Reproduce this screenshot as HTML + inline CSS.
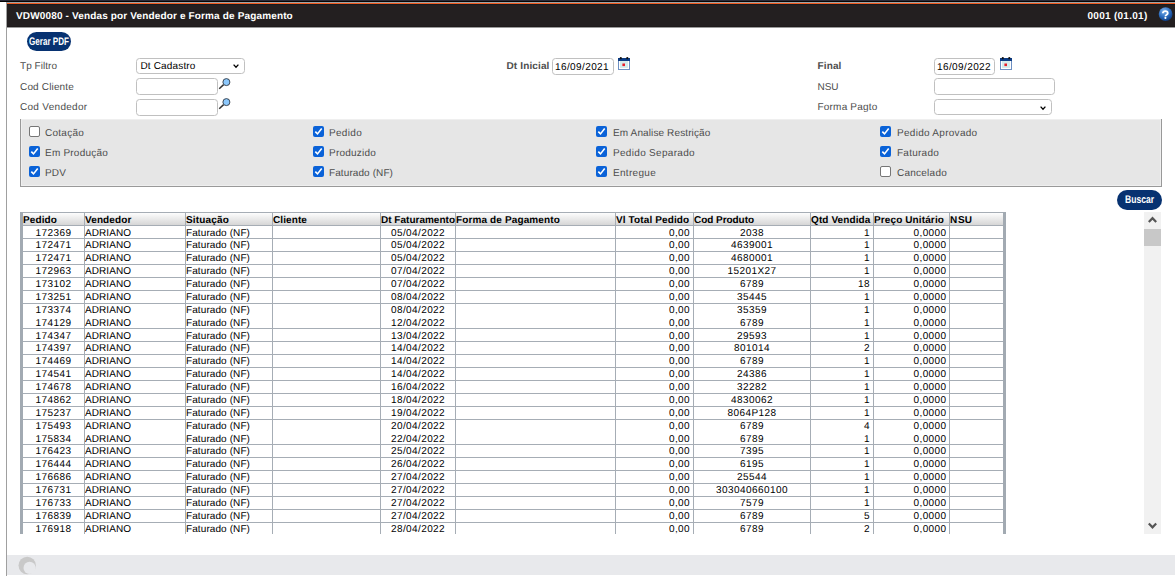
<!DOCTYPE html><html><head><meta charset="utf-8"><style>
*{margin:0;padding:0;box-sizing:border-box}
html,body{width:1175px;height:576px;overflow:hidden;background:#fff;font-family:"Liberation Sans",sans-serif;position:relative}
.a{position:absolute}
.t{position:absolute;white-space:nowrap;font-size:10px;line-height:12px;text-rendering:geometricPrecision}
.inp{position:absolute;border:1px solid #c0c0c0;border-radius:3.5px;background:#fff}
.cb{position:absolute;width:11px;height:11px;border-radius:2px}
.cb.on{background:#0a62d8}
.cb.off{background:#fff;border:1px solid #767676}
.btn{position:absolute;background:#073271;border-radius:10px}
</style></head><body>
<div class="a" style="left:0px;top:0px;width:1175px;height:1px;background:#2a2a38;"></div>
<div class="a" style="left:0px;top:1px;width:1175px;height:1px;background:#050505;"></div>
<div class="a" style="left:6px;top:2px;width:1px;height:574px;background:#a0a0a0;"></div>
<div class="a" style="left:7px;top:2px;width:1168px;height:1px;background:#a0a4a4;"></div>
<div class="a" style="left:7px;top:3px;width:1168px;height:1px;background:#f05a20;"></div>
<div class="a" style="left:7px;top:4px;width:1168px;height:1px;background:#161a1e;"></div>
<div class="a" style="left:7px;top:5px;width:1168px;height:22px;background:#231f20;"></div>
<div class="a" style="left:7px;top:26px;width:1168px;height:1px;background:#1e1a1b;"></div>
<div class="a" style="left:7px;top:27px;width:1168px;height:1px;background:#9a9a9a;"></div>
<div class="t" style="top:11px;letter-spacing:0.147px;color:#fff;font-weight:bold;left:16px;">VDW0080 - Vendas por Vendedor e Forma de Pagamento</div>
<div class="t" style="top:11px;letter-spacing:0.274px;color:#fff;font-weight:bold;left:1087.5px;">0001 (01.01)</div>
<svg class="a" style="left:1157px;top:6px" width="17" height="17" viewBox="0 0 17 17"><defs><radialGradient id="hg" cx="38%" cy="28%" r="75%"><stop offset="0" stop-color="#7fb4ee"/><stop offset="0.55" stop-color="#2f6fc0"/><stop offset="1" stop-color="#0a3a82"/></radialGradient></defs><circle cx="8.6" cy="8.05" r="6.9" fill="url(#hg)"/><path d="M5.85 7.2 C5.85 6 7 5.2 8.3 5.2 C9.7 5.2 10.75 6 10.75 7.2 C10.75 8.6 8.4 8.8 8.4 10.3" fill="none" stroke="#fff" stroke-width="1.8"/><circle cx="8.4" cy="11.9" r="1.05" fill="#fff"/></svg>
<div class="btn" style="left:27px;top:32px;width:44px;height:19px"></div>
<div class="t" style="left:28.5px;top:36px;color:#fff;font-size:11px;font-weight:bold;transform:scaleX(0.735);transform-origin:0 0">Gerar PDF</div>
<div class="t" style="top:61px;letter-spacing:0.037px;color:#4d4d4d;left:20px;">Tp Filtro</div>
<div class="t" style="top:82px;letter-spacing:0.159px;color:#4d4d4d;left:20px;">Cod Cliente</div>
<div class="t" style="top:102px;letter-spacing:0.292px;color:#4d4d4d;left:20px;">Cod Vendedor</div>
<div class="inp" style="left:136px;top:58px;width:109px;height:16px"></div>
<div class="t" style="top:61px;letter-spacing:0.150px;color:#000;left:140.5px;">Dt Cadastro</div>
<svg class="a" style="left:232px;top:63px" width="9" height="6" viewBox="0 0 9 6"><path d="M1.6 1.6 L4 4.2 L6.4 1.6" fill="none" stroke="#000" stroke-width="1.3"/></svg>
<div class="inp" style="left:136px;top:78px;width:82px;height:17px"></div>
<div class="inp" style="left:136px;top:99px;width:82px;height:17px"></div>
<svg class="a" style="left:218px;top:78px" width="14" height="14" viewBox="0 0 14 14"><line x1="1.2" y1="10.8" x2="5.6" y2="6.6" stroke="#333" stroke-width="1.5"/><circle cx="8.4" cy="4.1" r="3.5" fill="#8cc8fc" stroke="#333a44" stroke-width="0.9"/></svg>
<svg class="a" style="left:218px;top:98px" width="14" height="14" viewBox="0 0 14 14"><line x1="1.2" y1="10.8" x2="5.6" y2="6.6" stroke="#333" stroke-width="1.5"/><circle cx="8.4" cy="4.1" r="3.5" fill="#8cc8fc" stroke="#333a44" stroke-width="0.9"/></svg>
<div class="t" style="top:61px;letter-spacing:0.133px;color:#4d4d4d;font-weight:bold;left:506.5px;">Dt Inicial</div>
<div class="inp" style="left:552px;top:58px;width:62px;height:17px"></div>
<div class="t" style="top:62px;letter-spacing:0.395px;color:#000;left:555px;">16/09/2021</div>
<svg class="a" style="left:618px;top:57px" width="13" height="13" viewBox="0 0 13 13"><rect x="0.5" y="1.5" width="11" height="11" fill="#fff" stroke="#6d8fc2"/><rect x="2" y="4" width="8" height="7" fill="#d4ecec"/><rect x="0" y="1" width="12" height="3" fill="#0c3c84"/><circle cx="2.8" cy="1.2" r="1.1" fill="#111"/><circle cx="9.3" cy="1.2" r="1.1" fill="#111"/><rect x="4.4" y="6.5" width="2.6" height="2.6" fill="#e8202a"/></svg>
<div class="t" style="top:61px;letter-spacing:0.133px;color:#4d4d4d;font-weight:bold;left:817.5px;">Final</div>
<div class="inp" style="left:934px;top:58px;width:61px;height:17px"></div>
<div class="t" style="top:62px;letter-spacing:0.395px;color:#000;left:937px;">16/09/2022</div>
<svg class="a" style="left:1000px;top:57px" width="13" height="13" viewBox="0 0 13 13"><rect x="0.5" y="1.5" width="11" height="11" fill="#fff" stroke="#6d8fc2"/><rect x="2" y="4" width="8" height="7" fill="#d4ecec"/><rect x="0" y="1" width="12" height="3" fill="#0c3c84"/><circle cx="2.8" cy="1.2" r="1.1" fill="#111"/><circle cx="9.3" cy="1.2" r="1.1" fill="#111"/><rect x="4.4" y="6.5" width="2.6" height="2.6" fill="#e8202a"/></svg>
<div class="t" style="top:82px;letter-spacing:-0.038px;color:#4d4d4d;left:817.5px;">NSU</div>
<div class="inp" style="left:934px;top:78px;width:121px;height:17px"></div>
<div class="t" style="top:102px;letter-spacing:0.200px;color:#4d4d4d;left:817.5px;">Forma Pagto</div>
<div class="inp" style="left:934px;top:99px;width:118px;height:16px"></div>
<svg class="a" style="left:1038.8px;top:105px" width="9" height="6" viewBox="0 0 9 6"><path d="M1.6 1.6 L4 4.2 L6.4 1.6" fill="none" stroke="#000" stroke-width="1.3"/></svg>
<div class="a" style="left:20px;top:119px;width:1142px;height:68px;background:#e6e6e6;border:1px solid #999;border-top:0;box-shadow:inset 1px 1px 0 #efefef,inset -1px -1px 0 #efefef"></div>
<div class="cb off" style="left:29px;top:126px"></div>
<div class="t" style="top:128px;letter-spacing:0.251px;color:#4d4d4d;left:45px;">Cotação</div>
<div class="cb on" style="left:29px;top:146px"><svg width="11" height="11" viewBox="0 0 11 11" style="position:absolute;left:0;top:0"><path d="M2.3 5.6 L4.5 7.9 L8.7 2.6" fill="none" stroke="#fff" stroke-width="1.6"/></svg></div>
<div class="t" style="top:148px;letter-spacing:0.219px;color:#4d4d4d;left:45px;">Em Produção</div>
<div class="cb on" style="left:29px;top:166px"><svg width="11" height="11" viewBox="0 0 11 11" style="position:absolute;left:0;top:0"><path d="M2.3 5.6 L4.5 7.9 L8.7 2.6" fill="none" stroke="#fff" stroke-width="1.6"/></svg></div>
<div class="t" style="top:168px;letter-spacing:0.146px;color:#4d4d4d;left:45px;">PDV</div>
<div class="cb on" style="left:313px;top:126px"><svg width="11" height="11" viewBox="0 0 11 11" style="position:absolute;left:0;top:0"><path d="M2.3 5.6 L4.5 7.9 L8.7 2.6" fill="none" stroke="#fff" stroke-width="1.6"/></svg></div>
<div class="t" style="top:128px;letter-spacing:0.310px;color:#4d4d4d;left:329px;">Pedido</div>
<div class="cb on" style="left:313px;top:146px"><svg width="11" height="11" viewBox="0 0 11 11" style="position:absolute;left:0;top:0"><path d="M2.3 5.6 L4.5 7.9 L8.7 2.6" fill="none" stroke="#fff" stroke-width="1.6"/></svg></div>
<div class="t" style="top:148px;letter-spacing:0.219px;color:#4d4d4d;left:329px;">Produzido</div>
<div class="cb on" style="left:313px;top:166px"><svg width="11" height="11" viewBox="0 0 11 11" style="position:absolute;left:0;top:0"><path d="M2.3 5.6 L4.5 7.9 L8.7 2.6" fill="none" stroke="#fff" stroke-width="1.6"/></svg></div>
<div class="t" style="top:168px;letter-spacing:0.093px;color:#4d4d4d;left:329px;">Faturado (NF)</div>
<div class="cb on" style="left:596px;top:126px"><svg width="11" height="11" viewBox="0 0 11 11" style="position:absolute;left:0;top:0"><path d="M2.3 5.6 L4.5 7.9 L8.7 2.6" fill="none" stroke="#fff" stroke-width="1.6"/></svg></div>
<div class="t" style="top:128px;letter-spacing:0.120px;color:#4d4d4d;left:613px;">Em Analise Restrição</div>
<div class="cb on" style="left:596px;top:146px"><svg width="11" height="11" viewBox="0 0 11 11" style="position:absolute;left:0;top:0"><path d="M2.3 5.6 L4.5 7.9 L8.7 2.6" fill="none" stroke="#fff" stroke-width="1.6"/></svg></div>
<div class="t" style="top:148px;letter-spacing:0.314px;color:#4d4d4d;left:613px;">Pedido Separado</div>
<div class="cb on" style="left:596px;top:166px"><svg width="11" height="11" viewBox="0 0 11 11" style="position:absolute;left:0;top:0"><path d="M2.3 5.6 L4.5 7.9 L8.7 2.6" fill="none" stroke="#fff" stroke-width="1.6"/></svg></div>
<div class="t" style="top:168px;letter-spacing:0.302px;color:#4d4d4d;left:613px;">Entregue</div>
<div class="cb on" style="left:880px;top:126px"><svg width="11" height="11" viewBox="0 0 11 11" style="position:absolute;left:0;top:0"><path d="M2.3 5.6 L4.5 7.9 L8.7 2.6" fill="none" stroke="#fff" stroke-width="1.6"/></svg></div>
<div class="t" style="top:128px;letter-spacing:0.285px;color:#4d4d4d;left:897px;">Pedido Aprovado</div>
<div class="cb on" style="left:880px;top:146px"><svg width="11" height="11" viewBox="0 0 11 11" style="position:absolute;left:0;top:0"><path d="M2.3 5.6 L4.5 7.9 L8.7 2.6" fill="none" stroke="#fff" stroke-width="1.6"/></svg></div>
<div class="t" style="top:148px;letter-spacing:0.247px;color:#4d4d4d;left:897px;">Faturado</div>
<div class="cb off" style="left:880px;top:166px"></div>
<div class="t" style="top:168px;letter-spacing:0.243px;color:#4d4d4d;left:897px;">Cancelado</div>
<div class="btn" style="left:1117px;top:190px;width:45px;height:20px"></div>
<div class="t" style="left:1124.5px;top:194px;color:#fff;font-size:11px;font-weight:bold;transform:scaleX(0.78);transform-origin:0 0">Buscar</div>
<div class="a" style="left:20px;top:212px;width:986px;height:1px;background:#a6adb5;"></div>
<div class="a" style="left:20px;top:212px;width:3px;height:322px;background:#a2aab2;"></div>
<div class="a" style="left:1003px;top:212px;width:3px;height:322px;background:#a2aab2;"></div>
<div class="a" style="left:23px;top:213px;width:980px;height:12px;background:linear-gradient(#fdfdfd,#d6d6d6);"></div>
<div class="a" style="left:23px;top:225px;width:980px;height:1px;background:#a6adb5;"></div>
<div class="a" style="left:23px;top:238px;width:980px;height:1px;background:#a6adb5;"></div>
<div class="a" style="left:23px;top:251px;width:980px;height:1px;background:#a6adb5;"></div>
<div class="a" style="left:23px;top:264px;width:980px;height:1px;background:#a6adb5;"></div>
<div class="a" style="left:23px;top:277px;width:980px;height:1px;background:#a6adb5;"></div>
<div class="a" style="left:23px;top:290px;width:980px;height:1px;background:#a6adb5;"></div>
<div class="a" style="left:23px;top:303px;width:980px;height:1px;background:#a6adb5;"></div>
<div class="a" style="left:23px;top:328px;width:980px;height:1px;background:#a6adb5;"></div>
<div class="a" style="left:23px;top:341px;width:980px;height:1px;background:#a6adb5;"></div>
<div class="a" style="left:23px;top:354px;width:980px;height:1px;background:#a6adb5;"></div>
<div class="a" style="left:23px;top:367px;width:980px;height:1px;background:#a6adb5;"></div>
<div class="a" style="left:23px;top:380px;width:980px;height:1px;background:#a6adb5;"></div>
<div class="a" style="left:23px;top:393px;width:980px;height:1px;background:#a6adb5;"></div>
<div class="a" style="left:23px;top:406px;width:980px;height:1px;background:#a6adb5;"></div>
<div class="a" style="left:23px;top:419px;width:980px;height:1px;background:#a6adb5;"></div>
<div class="a" style="left:23px;top:444px;width:980px;height:1px;background:#a6adb5;"></div>
<div class="a" style="left:23px;top:457px;width:980px;height:1px;background:#a6adb5;"></div>
<div class="a" style="left:23px;top:470px;width:980px;height:1px;background:#a6adb5;"></div>
<div class="a" style="left:23px;top:483px;width:980px;height:1px;background:#a6adb5;"></div>
<div class="a" style="left:23px;top:496px;width:980px;height:1px;background:#a6adb5;"></div>
<div class="a" style="left:23px;top:509px;width:980px;height:1px;background:#a6adb5;"></div>
<div class="a" style="left:23px;top:522px;width:980px;height:1px;background:#a6adb5;"></div>
<div class="a" style="left:84px;top:213px;width:1px;height:321px;background:#a6adb5;"></div>
<div class="a" style="left:185px;top:213px;width:1px;height:321px;background:#a6adb5;"></div>
<div class="a" style="left:272px;top:213px;width:1px;height:321px;background:#a6adb5;"></div>
<div class="a" style="left:380px;top:213px;width:1px;height:321px;background:#a6adb5;"></div>
<div class="a" style="left:455px;top:213px;width:1px;height:321px;background:#a6adb5;"></div>
<div class="a" style="left:615px;top:213px;width:1px;height:321px;background:#a6adb5;"></div>
<div class="a" style="left:693px;top:213px;width:1px;height:321px;background:#a6adb5;"></div>
<div class="a" style="left:810px;top:213px;width:1px;height:321px;background:#a6adb5;"></div>
<div class="a" style="left:873px;top:213px;width:1px;height:321px;background:#a6adb5;"></div>
<div class="a" style="left:949px;top:213px;width:1px;height:321px;background:#a6adb5;"></div>
<div class="t" style="top:215px;letter-spacing:0.111px;color:#000;font-weight:bold;left:23px;">Pedido</div>
<div class="t" style="top:215px;letter-spacing:0.110px;color:#000;font-weight:bold;left:85px;">Vendedor</div>
<div class="t" style="top:215px;letter-spacing:0.165px;color:#000;font-weight:bold;left:186px;">Situação</div>
<div class="t" style="top:215px;letter-spacing:0.094px;color:#000;font-weight:bold;left:273px;">Cliente</div>
<div class="t" style="top:215px;letter-spacing:0.008px;color:#000;font-weight:bold;left:381px;">Dt Faturamento</div>
<div class="t" style="top:215px;letter-spacing:0.128px;color:#000;font-weight:bold;left:456px;">Forma de Pagamento</div>
<div class="t" style="top:215px;letter-spacing:0.118px;color:#000;font-weight:bold;left:616px;">Vl Total Pedido</div>
<div class="t" style="top:215px;letter-spacing:-0.049px;color:#000;font-weight:bold;left:694px;">Cod Produto</div>
<div class="t" style="top:215px;letter-spacing:0.101px;color:#000;font-weight:bold;left:811px;">Qtd Vendida</div>
<div class="t" style="top:215px;letter-spacing:0.118px;color:#000;font-weight:bold;left:874px;">Preço Unitário</div>
<div class="t" style="top:215px;letter-spacing:-0.222px;color:#000;font-weight:bold;left:950px;">N</div>
<div class="t" style="top:215px;letter-spacing:0.054px;color:#000;font-weight:bold;left:958px;">SU</div>
<div class="t" style="top:228px;letter-spacing:0.438px;color:#000;left:35.50px;">172369</div>
<div class="t" style="top:228px;letter-spacing:0.063px;color:#000;left:85px;">ADRIANO</div>
<div class="t" style="top:228px;letter-spacing:0.093px;color:#000;left:186px;">Faturado (NF)</div>
<div class="t" style="top:228px;letter-spacing:0.395px;color:#000;left:391.00px;">05/04/2022</div>
<div class="t" style="top:228px;letter-spacing:0.384px;color:#000;left:669px;">0,00</div>
<div class="t" style="top:228px;letter-spacing:0.438px;color:#000;left:740.00px;">2038</div>
<div class="t" style="top:228px;letter-spacing:0.438px;color:#000;left:864px;">1</div>
<div class="t" style="top:228px;letter-spacing:0.402px;color:#000;left:913.5px;">0,0000</div>
<div class="t" style="top:240px;letter-spacing:0.438px;color:#000;left:35.50px;">172471</div>
<div class="t" style="top:240px;letter-spacing:0.063px;color:#000;left:85px;">ADRIANO</div>
<div class="t" style="top:240px;letter-spacing:0.093px;color:#000;left:186px;">Faturado (NF)</div>
<div class="t" style="top:240px;letter-spacing:0.395px;color:#000;left:391.00px;">05/04/2022</div>
<div class="t" style="top:240px;letter-spacing:0.384px;color:#000;left:669px;">0,00</div>
<div class="t" style="top:240px;letter-spacing:0.438px;color:#000;left:731.00px;">4639001</div>
<div class="t" style="top:240px;letter-spacing:0.438px;color:#000;left:864px;">1</div>
<div class="t" style="top:240px;letter-spacing:0.402px;color:#000;left:913.5px;">0,0000</div>
<div class="t" style="top:253px;letter-spacing:0.438px;color:#000;left:35.50px;">172471</div>
<div class="t" style="top:253px;letter-spacing:0.063px;color:#000;left:85px;">ADRIANO</div>
<div class="t" style="top:253px;letter-spacing:0.093px;color:#000;left:186px;">Faturado (NF)</div>
<div class="t" style="top:253px;letter-spacing:0.395px;color:#000;left:391.00px;">05/04/2022</div>
<div class="t" style="top:253px;letter-spacing:0.384px;color:#000;left:669px;">0,00</div>
<div class="t" style="top:253px;letter-spacing:0.438px;color:#000;left:731.00px;">4680001</div>
<div class="t" style="top:253px;letter-spacing:0.438px;color:#000;left:864px;">1</div>
<div class="t" style="top:253px;letter-spacing:0.402px;color:#000;left:913.5px;">0,0000</div>
<div class="t" style="top:266px;letter-spacing:0.438px;color:#000;left:35.50px;">172963</div>
<div class="t" style="top:266px;letter-spacing:0.063px;color:#000;left:85px;">ADRIANO</div>
<div class="t" style="top:266px;letter-spacing:0.093px;color:#000;left:186px;">Faturado (NF)</div>
<div class="t" style="top:266px;letter-spacing:0.395px;color:#000;left:391.00px;">07/04/2022</div>
<div class="t" style="top:266px;letter-spacing:0.384px;color:#000;left:669px;">0,00</div>
<div class="t" style="top:266px;letter-spacing:0.425px;color:#000;left:727.50px;">15201X27</div>
<div class="t" style="top:266px;letter-spacing:0.438px;color:#000;left:864px;">1</div>
<div class="t" style="top:266px;letter-spacing:0.402px;color:#000;left:913.5px;">0,0000</div>
<div class="t" style="top:279px;letter-spacing:0.438px;color:#000;left:35.50px;">173102</div>
<div class="t" style="top:279px;letter-spacing:0.063px;color:#000;left:85px;">ADRIANO</div>
<div class="t" style="top:279px;letter-spacing:0.093px;color:#000;left:186px;">Faturado (NF)</div>
<div class="t" style="top:279px;letter-spacing:0.395px;color:#000;left:391.00px;">07/04/2022</div>
<div class="t" style="top:279px;letter-spacing:0.384px;color:#000;left:669px;">0,00</div>
<div class="t" style="top:279px;letter-spacing:0.438px;color:#000;left:740.00px;">6789</div>
<div class="t" style="top:279px;letter-spacing:0.438px;color:#000;left:858px;">18</div>
<div class="t" style="top:279px;letter-spacing:0.402px;color:#000;left:913.5px;">0,0000</div>
<div class="t" style="top:292px;letter-spacing:0.438px;color:#000;left:35.50px;">173251</div>
<div class="t" style="top:292px;letter-spacing:0.063px;color:#000;left:85px;">ADRIANO</div>
<div class="t" style="top:292px;letter-spacing:0.093px;color:#000;left:186px;">Faturado (NF)</div>
<div class="t" style="top:292px;letter-spacing:0.395px;color:#000;left:391.00px;">08/04/2022</div>
<div class="t" style="top:292px;letter-spacing:0.384px;color:#000;left:669px;">0,00</div>
<div class="t" style="top:292px;letter-spacing:0.438px;color:#000;left:737.00px;">35445</div>
<div class="t" style="top:292px;letter-spacing:0.438px;color:#000;left:864px;">1</div>
<div class="t" style="top:292px;letter-spacing:0.402px;color:#000;left:913.5px;">0,0000</div>
<div class="t" style="top:305px;letter-spacing:0.438px;color:#000;left:35.50px;">173374</div>
<div class="t" style="top:305px;letter-spacing:0.063px;color:#000;left:85px;">ADRIANO</div>
<div class="t" style="top:305px;letter-spacing:0.093px;color:#000;left:186px;">Faturado (NF)</div>
<div class="t" style="top:305px;letter-spacing:0.395px;color:#000;left:391.00px;">08/04/2022</div>
<div class="t" style="top:305px;letter-spacing:0.384px;color:#000;left:669px;">0,00</div>
<div class="t" style="top:305px;letter-spacing:0.438px;color:#000;left:737.00px;">35359</div>
<div class="t" style="top:305px;letter-spacing:0.438px;color:#000;left:864px;">1</div>
<div class="t" style="top:305px;letter-spacing:0.402px;color:#000;left:913.5px;">0,0000</div>
<div class="t" style="top:318px;letter-spacing:0.438px;color:#000;left:35.50px;">174129</div>
<div class="t" style="top:318px;letter-spacing:0.063px;color:#000;left:85px;">ADRIANO</div>
<div class="t" style="top:318px;letter-spacing:0.093px;color:#000;left:186px;">Faturado (NF)</div>
<div class="t" style="top:318px;letter-spacing:0.395px;color:#000;left:391.00px;">12/04/2022</div>
<div class="t" style="top:318px;letter-spacing:0.384px;color:#000;left:669px;">0,00</div>
<div class="t" style="top:318px;letter-spacing:0.438px;color:#000;left:740.00px;">6789</div>
<div class="t" style="top:318px;letter-spacing:0.438px;color:#000;left:864px;">1</div>
<div class="t" style="top:318px;letter-spacing:0.402px;color:#000;left:913.5px;">0,0000</div>
<div class="t" style="top:331px;letter-spacing:0.438px;color:#000;left:35.50px;">174347</div>
<div class="t" style="top:331px;letter-spacing:0.063px;color:#000;left:85px;">ADRIANO</div>
<div class="t" style="top:331px;letter-spacing:0.093px;color:#000;left:186px;">Faturado (NF)</div>
<div class="t" style="top:331px;letter-spacing:0.395px;color:#000;left:391.00px;">13/04/2022</div>
<div class="t" style="top:331px;letter-spacing:0.384px;color:#000;left:669px;">0,00</div>
<div class="t" style="top:331px;letter-spacing:0.438px;color:#000;left:737.00px;">29593</div>
<div class="t" style="top:331px;letter-spacing:0.438px;color:#000;left:864px;">1</div>
<div class="t" style="top:331px;letter-spacing:0.402px;color:#000;left:913.5px;">0,0000</div>
<div class="t" style="top:343px;letter-spacing:0.438px;color:#000;left:35.50px;">174397</div>
<div class="t" style="top:343px;letter-spacing:0.063px;color:#000;left:85px;">ADRIANO</div>
<div class="t" style="top:343px;letter-spacing:0.093px;color:#000;left:186px;">Faturado (NF)</div>
<div class="t" style="top:343px;letter-spacing:0.395px;color:#000;left:391.00px;">14/04/2022</div>
<div class="t" style="top:343px;letter-spacing:0.384px;color:#000;left:669px;">0,00</div>
<div class="t" style="top:343px;letter-spacing:0.438px;color:#000;left:734.00px;">801014</div>
<div class="t" style="top:343px;letter-spacing:0.438px;color:#000;left:864px;">2</div>
<div class="t" style="top:343px;letter-spacing:0.402px;color:#000;left:913.5px;">0,0000</div>
<div class="t" style="top:356px;letter-spacing:0.438px;color:#000;left:35.50px;">174469</div>
<div class="t" style="top:356px;letter-spacing:0.063px;color:#000;left:85px;">ADRIANO</div>
<div class="t" style="top:356px;letter-spacing:0.093px;color:#000;left:186px;">Faturado (NF)</div>
<div class="t" style="top:356px;letter-spacing:0.395px;color:#000;left:391.00px;">14/04/2022</div>
<div class="t" style="top:356px;letter-spacing:0.384px;color:#000;left:669px;">0,00</div>
<div class="t" style="top:356px;letter-spacing:0.438px;color:#000;left:740.00px;">6789</div>
<div class="t" style="top:356px;letter-spacing:0.438px;color:#000;left:864px;">1</div>
<div class="t" style="top:356px;letter-spacing:0.402px;color:#000;left:913.5px;">0,0000</div>
<div class="t" style="top:369px;letter-spacing:0.438px;color:#000;left:35.50px;">174541</div>
<div class="t" style="top:369px;letter-spacing:0.063px;color:#000;left:85px;">ADRIANO</div>
<div class="t" style="top:369px;letter-spacing:0.093px;color:#000;left:186px;">Faturado (NF)</div>
<div class="t" style="top:369px;letter-spacing:0.395px;color:#000;left:391.00px;">14/04/2022</div>
<div class="t" style="top:369px;letter-spacing:0.384px;color:#000;left:669px;">0,00</div>
<div class="t" style="top:369px;letter-spacing:0.438px;color:#000;left:737.00px;">24386</div>
<div class="t" style="top:369px;letter-spacing:0.438px;color:#000;left:864px;">1</div>
<div class="t" style="top:369px;letter-spacing:0.402px;color:#000;left:913.5px;">0,0000</div>
<div class="t" style="top:382px;letter-spacing:0.438px;color:#000;left:35.50px;">174678</div>
<div class="t" style="top:382px;letter-spacing:0.063px;color:#000;left:85px;">ADRIANO</div>
<div class="t" style="top:382px;letter-spacing:0.093px;color:#000;left:186px;">Faturado (NF)</div>
<div class="t" style="top:382px;letter-spacing:0.395px;color:#000;left:391.00px;">16/04/2022</div>
<div class="t" style="top:382px;letter-spacing:0.384px;color:#000;left:669px;">0,00</div>
<div class="t" style="top:382px;letter-spacing:0.438px;color:#000;left:737.00px;">32282</div>
<div class="t" style="top:382px;letter-spacing:0.438px;color:#000;left:864px;">1</div>
<div class="t" style="top:382px;letter-spacing:0.402px;color:#000;left:913.5px;">0,0000</div>
<div class="t" style="top:395px;letter-spacing:0.438px;color:#000;left:35.50px;">174862</div>
<div class="t" style="top:395px;letter-spacing:0.063px;color:#000;left:85px;">ADRIANO</div>
<div class="t" style="top:395px;letter-spacing:0.093px;color:#000;left:186px;">Faturado (NF)</div>
<div class="t" style="top:395px;letter-spacing:0.395px;color:#000;left:391.00px;">18/04/2022</div>
<div class="t" style="top:395px;letter-spacing:0.384px;color:#000;left:669px;">0,00</div>
<div class="t" style="top:395px;letter-spacing:0.438px;color:#000;left:731.00px;">4830062</div>
<div class="t" style="top:395px;letter-spacing:0.438px;color:#000;left:864px;">1</div>
<div class="t" style="top:395px;letter-spacing:0.402px;color:#000;left:913.5px;">0,0000</div>
<div class="t" style="top:408px;letter-spacing:0.438px;color:#000;left:35.50px;">175237</div>
<div class="t" style="top:408px;letter-spacing:0.063px;color:#000;left:85px;">ADRIANO</div>
<div class="t" style="top:408px;letter-spacing:0.093px;color:#000;left:186px;">Faturado (NF)</div>
<div class="t" style="top:408px;letter-spacing:0.395px;color:#000;left:391.00px;">19/04/2022</div>
<div class="t" style="top:408px;letter-spacing:0.384px;color:#000;left:669px;">0,00</div>
<div class="t" style="top:408px;letter-spacing:0.425px;color:#000;left:727.50px;">8064P128</div>
<div class="t" style="top:408px;letter-spacing:0.438px;color:#000;left:864px;">1</div>
<div class="t" style="top:408px;letter-spacing:0.402px;color:#000;left:913.5px;">0,0000</div>
<div class="t" style="top:421px;letter-spacing:0.438px;color:#000;left:35.50px;">175493</div>
<div class="t" style="top:421px;letter-spacing:0.063px;color:#000;left:85px;">ADRIANO</div>
<div class="t" style="top:421px;letter-spacing:0.093px;color:#000;left:186px;">Faturado (NF)</div>
<div class="t" style="top:421px;letter-spacing:0.395px;color:#000;left:391.00px;">20/04/2022</div>
<div class="t" style="top:421px;letter-spacing:0.384px;color:#000;left:669px;">0,00</div>
<div class="t" style="top:421px;letter-spacing:0.438px;color:#000;left:740.00px;">6789</div>
<div class="t" style="top:421px;letter-spacing:0.438px;color:#000;left:864px;">4</div>
<div class="t" style="top:421px;letter-spacing:0.402px;color:#000;left:913.5px;">0,0000</div>
<div class="t" style="top:434px;letter-spacing:0.438px;color:#000;left:35.50px;">175834</div>
<div class="t" style="top:434px;letter-spacing:0.063px;color:#000;left:85px;">ADRIANO</div>
<div class="t" style="top:434px;letter-spacing:0.093px;color:#000;left:186px;">Faturado (NF)</div>
<div class="t" style="top:434px;letter-spacing:0.395px;color:#000;left:391.00px;">22/04/2022</div>
<div class="t" style="top:434px;letter-spacing:0.384px;color:#000;left:669px;">0,00</div>
<div class="t" style="top:434px;letter-spacing:0.438px;color:#000;left:740.00px;">6789</div>
<div class="t" style="top:434px;letter-spacing:0.438px;color:#000;left:864px;">1</div>
<div class="t" style="top:434px;letter-spacing:0.402px;color:#000;left:913.5px;">0,0000</div>
<div class="t" style="top:446px;letter-spacing:0.438px;color:#000;left:35.50px;">176423</div>
<div class="t" style="top:446px;letter-spacing:0.063px;color:#000;left:85px;">ADRIANO</div>
<div class="t" style="top:446px;letter-spacing:0.093px;color:#000;left:186px;">Faturado (NF)</div>
<div class="t" style="top:446px;letter-spacing:0.395px;color:#000;left:391.00px;">25/04/2022</div>
<div class="t" style="top:446px;letter-spacing:0.384px;color:#000;left:669px;">0,00</div>
<div class="t" style="top:446px;letter-spacing:0.438px;color:#000;left:740.00px;">7395</div>
<div class="t" style="top:446px;letter-spacing:0.438px;color:#000;left:864px;">1</div>
<div class="t" style="top:446px;letter-spacing:0.402px;color:#000;left:913.5px;">0,0000</div>
<div class="t" style="top:459px;letter-spacing:0.438px;color:#000;left:35.50px;">176444</div>
<div class="t" style="top:459px;letter-spacing:0.063px;color:#000;left:85px;">ADRIANO</div>
<div class="t" style="top:459px;letter-spacing:0.093px;color:#000;left:186px;">Faturado (NF)</div>
<div class="t" style="top:459px;letter-spacing:0.395px;color:#000;left:391.00px;">26/04/2022</div>
<div class="t" style="top:459px;letter-spacing:0.384px;color:#000;left:669px;">0,00</div>
<div class="t" style="top:459px;letter-spacing:0.438px;color:#000;left:740.00px;">6195</div>
<div class="t" style="top:459px;letter-spacing:0.438px;color:#000;left:864px;">1</div>
<div class="t" style="top:459px;letter-spacing:0.402px;color:#000;left:913.5px;">0,0000</div>
<div class="t" style="top:472px;letter-spacing:0.438px;color:#000;left:35.50px;">176686</div>
<div class="t" style="top:472px;letter-spacing:0.063px;color:#000;left:85px;">ADRIANO</div>
<div class="t" style="top:472px;letter-spacing:0.093px;color:#000;left:186px;">Faturado (NF)</div>
<div class="t" style="top:472px;letter-spacing:0.395px;color:#000;left:391.00px;">27/04/2022</div>
<div class="t" style="top:472px;letter-spacing:0.384px;color:#000;left:669px;">0,00</div>
<div class="t" style="top:472px;letter-spacing:0.438px;color:#000;left:737.00px;">25544</div>
<div class="t" style="top:472px;letter-spacing:0.438px;color:#000;left:864px;">1</div>
<div class="t" style="top:472px;letter-spacing:0.402px;color:#000;left:913.5px;">0,0000</div>
<div class="t" style="top:485px;letter-spacing:0.438px;color:#000;left:35.50px;">176731</div>
<div class="t" style="top:485px;letter-spacing:0.063px;color:#000;left:85px;">ADRIANO</div>
<div class="t" style="top:485px;letter-spacing:0.093px;color:#000;left:186px;">Faturado (NF)</div>
<div class="t" style="top:485px;letter-spacing:0.395px;color:#000;left:391.00px;">27/04/2022</div>
<div class="t" style="top:485px;letter-spacing:0.384px;color:#000;left:669px;">0,00</div>
<div class="t" style="top:485px;letter-spacing:0.438px;color:#000;left:716.00px;">303040660100</div>
<div class="t" style="top:485px;letter-spacing:0.438px;color:#000;left:864px;">1</div>
<div class="t" style="top:485px;letter-spacing:0.402px;color:#000;left:913.5px;">0,0000</div>
<div class="t" style="top:498px;letter-spacing:0.438px;color:#000;left:35.50px;">176733</div>
<div class="t" style="top:498px;letter-spacing:0.063px;color:#000;left:85px;">ADRIANO</div>
<div class="t" style="top:498px;letter-spacing:0.093px;color:#000;left:186px;">Faturado (NF)</div>
<div class="t" style="top:498px;letter-spacing:0.395px;color:#000;left:391.00px;">27/04/2022</div>
<div class="t" style="top:498px;letter-spacing:0.384px;color:#000;left:669px;">0,00</div>
<div class="t" style="top:498px;letter-spacing:0.438px;color:#000;left:740.00px;">7579</div>
<div class="t" style="top:498px;letter-spacing:0.438px;color:#000;left:864px;">1</div>
<div class="t" style="top:498px;letter-spacing:0.402px;color:#000;left:913.5px;">0,0000</div>
<div class="t" style="top:511px;letter-spacing:0.438px;color:#000;left:35.50px;">176839</div>
<div class="t" style="top:511px;letter-spacing:0.063px;color:#000;left:85px;">ADRIANO</div>
<div class="t" style="top:511px;letter-spacing:0.093px;color:#000;left:186px;">Faturado (NF)</div>
<div class="t" style="top:511px;letter-spacing:0.395px;color:#000;left:391.00px;">27/04/2022</div>
<div class="t" style="top:511px;letter-spacing:0.384px;color:#000;left:669px;">0,00</div>
<div class="t" style="top:511px;letter-spacing:0.438px;color:#000;left:740.00px;">6789</div>
<div class="t" style="top:511px;letter-spacing:0.438px;color:#000;left:864px;">5</div>
<div class="t" style="top:511px;letter-spacing:0.402px;color:#000;left:913.5px;">0,0000</div>
<div class="t" style="top:524px;letter-spacing:0.438px;color:#000;left:35.50px;">176918</div>
<div class="t" style="top:524px;letter-spacing:0.063px;color:#000;left:85px;">ADRIANO</div>
<div class="t" style="top:524px;letter-spacing:0.093px;color:#000;left:186px;">Faturado (NF)</div>
<div class="t" style="top:524px;letter-spacing:0.395px;color:#000;left:391.00px;">28/04/2022</div>
<div class="t" style="top:524px;letter-spacing:0.384px;color:#000;left:669px;">0,00</div>
<div class="t" style="top:524px;letter-spacing:0.438px;color:#000;left:740.00px;">6789</div>
<div class="t" style="top:524px;letter-spacing:0.438px;color:#000;left:864px;">2</div>
<div class="t" style="top:524px;letter-spacing:0.402px;color:#000;left:913.5px;">0,0000</div>
<div class="a" style="left:7px;top:534px;width:1137px;height:21px;background:#fff;"></div>
<div class="a" style="left:1144px;top:212px;width:17px;height:322px;background:#f1f1f1;"></div>
<div class="a" style="left:1144px;top:229px;width:17px;height:17px;background:#c8c8c8;"></div>
<svg class="a" style="left:1147px;top:215px" width="11" height="10" viewBox="0 0 11 10"><path d="M1.8 7 L5.5 3.2 L9.2 7" fill="none" stroke="#555" stroke-width="2.2"/></svg>
<svg class="a" style="left:1147px;top:521px" width="11" height="10" viewBox="0 0 11 10"><path d="M1.8 2.5 L5.5 6.3 L9.2 2.5" fill="none" stroke="#555" stroke-width="2.2"/></svg>
<div class="a" style="left:7px;top:555px;width:1168px;height:20px;background:#e8e9ec;"></div>
<svg class="a" style="left:18px;top:556px" width="19" height="19" viewBox="0 0 19 19"><circle cx="9.2" cy="9.5" r="8.7" fill="#c9c9c9"/><circle cx="11.6" cy="11.9" r="6.1" fill="#e8e9ec"/></svg>
</body></html>
